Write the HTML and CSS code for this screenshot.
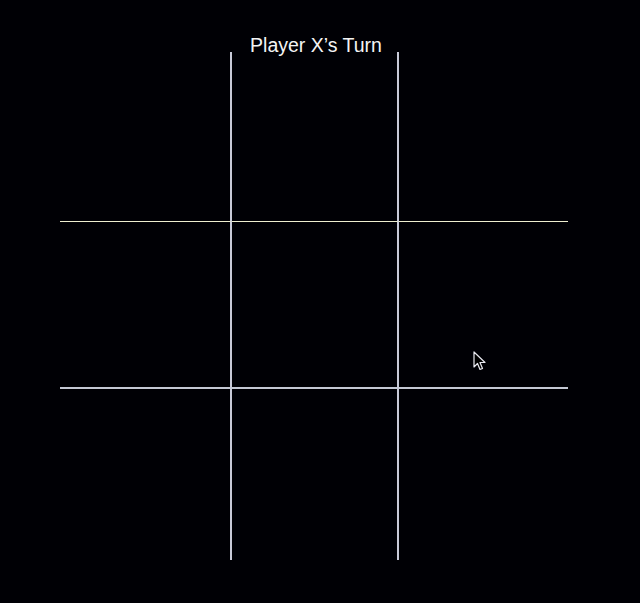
FILE: index.html
```html
<!DOCTYPE html>
<html lang="en">
<head>
    <meta charset="UTF-8">
    <meta name="viewport" content="width=device-width, initial-scale=1.0">
    <title>Tic Tac Toe</title>
    <link rel="stylesheet" href="styles.css">
</head>
<body>
    <div class="game">
        <h1 class="status">Player X’s Turn</h1>
        <div class="board">
            <div class="cell c1 r1"></div>
            <div class="cell c2 r1"></div>
            <div class="cell c3 r1"></div>
            <div class="cell c1 r2"></div>
            <div class="cell c2 r2"></div>
            <div class="cell c3 r2"></div>
            <div class="cell c1 r3"></div>
            <div class="cell c2 r3"></div>
            <div class="cell c3 r3"></div>
        </div>
    </div>

    <svg class="cursor" width="13" height="20" viewBox="0 0 13 20">
        <path d="M1 1 L1 16 L4.5 12.5 L7 18.5 L9.5 17.5 L7 11.5 L12 11.5 Z" fill="#000" stroke="#e8e8f0" stroke-width="1.2" stroke-linejoin="round"/>
    </svg>
</body>
</html>
```

FILE: styles.css
```css
body {
    margin: 0;
    padding: 0;
    background-color: #000005;
    font-family: "Liberation Sans", Arial, sans-serif;
    height: 603px;
    overflow: hidden;
}
.game {
    padding-top: 36px;
    padding-left: 60px;
    width: 508px;
}
.status {
    margin: 0;
    height: 16px;
    line-height: 19px;
    font-size: 19.5px;
    font-weight: normal;
    color: #f4f4f4;
    text-align: center;
    padding-left: 4px;
}
.board {
    display: grid;
    grid-template-columns: 172px 167px 169px;
    grid-template-rows: 170px 167px 171px;
}
.cell {
    box-sizing: border-box;
    cursor: pointer;
}
.c1, .c2 {
    border-right: 2px solid #c8cad8;
}
.r1 {
    border-bottom: 1px solid #eeeed0;
}
.r2 {
    border-bottom: 2px solid #c4c8d4;
}
.cursor {
    position: absolute;
    left: 473px;
    top: 351px;
}
```
